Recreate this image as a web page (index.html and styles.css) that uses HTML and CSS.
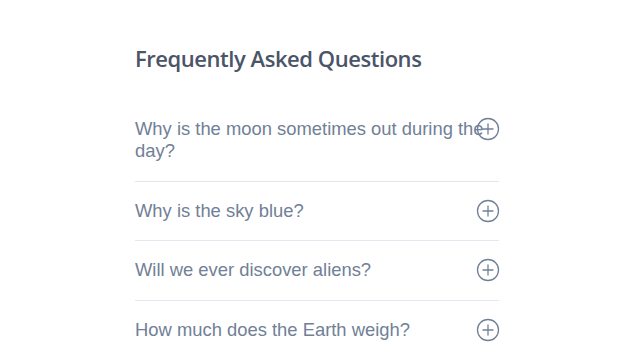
FILE: index.html
```html
<!DOCTYPE html>
<html lang="en">
<head>
    <meta charset="UTF-8">
    <meta name="viewport" content="width=device-width, initial-scale=1.0">
    <title>FAQ</title>
    <link rel="stylesheet" href="styles.css">
</head>
<body>

<div class="faq">
    <h1 class="faq-title">Frequently Asked Questions</h1>

    <div class="faq-list">
        <div class="faq-item">
            <p class="question">Why is the moon sometimes out during the day?</p>
            <span class="toggle">
                <svg viewBox="0 0 24 24" width="24" height="24"><circle cx="12" cy="12" r="10.5"/><path d="M12 7v10M7 12h10"/></svg>
            </span>
        </div>
        <div class="faq-item">
            <p class="question">Why is the sky blue?</p>
            <span class="toggle">
                <svg viewBox="0 0 24 24" width="24" height="24"><circle cx="12" cy="12" r="10.5"/><path d="M12 7v10M7 12h10"/></svg>
            </span>
        </div>
        <div class="faq-item">
            <p class="question">Will we ever discover aliens?</p>
            <span class="toggle">
                <svg viewBox="0 0 24 24" width="24" height="24"><circle cx="12" cy="12" r="10.5"/><path d="M12 7v10M7 12h10"/></svg>
            </span>
        </div>
        <div class="faq-item">
            <p class="question">How much does the Earth weigh?</p>
            <span class="toggle">
                <svg viewBox="0 0 24 24" width="24" height="24"><circle cx="12" cy="12" r="10.5"/><path d="M12 7v10M7 12h10"/></svg>
            </span>
        </div>
    </div>
</div>

</body>
</html>
```

FILE: styles.css
```css
body {
    margin: 0;
    padding: 0;
    background-color: #fff;
    font-family: "Liberation Sans", Arial, sans-serif;
}

.faq {
    width: 364px;
    margin: 0 0 0 135px;
    padding-top: 42px;
}

.faq-title {
    font-family: "Open Sans", "Noto Sans", sans-serif;
    font-weight: 600;
    font-size: 22px;
    line-height: 32px;
    letter-spacing: -0.45px;
    color: #4a5568;
    margin: 0 0 26px 0;
}

.faq-item {
    position: relative;
    padding: 18px 0 18.5px;
    border-bottom: 1px solid #e2e8f0;
}

.faq-item:last-child {
    border-bottom: none;
}

.question {
    margin: 0;
    font-size: 18.4px;
    line-height: 22px;
    color: #718096;
}

.toggle {
    position: absolute;
    right: -1px;
    top: 17px;
    width: 24px;
    height: 24px;
}

.toggle svg {
    display: block;
    fill: none;
    stroke: #718096;
    stroke-width: 1.3;
    stroke-linecap: round;
}
```
